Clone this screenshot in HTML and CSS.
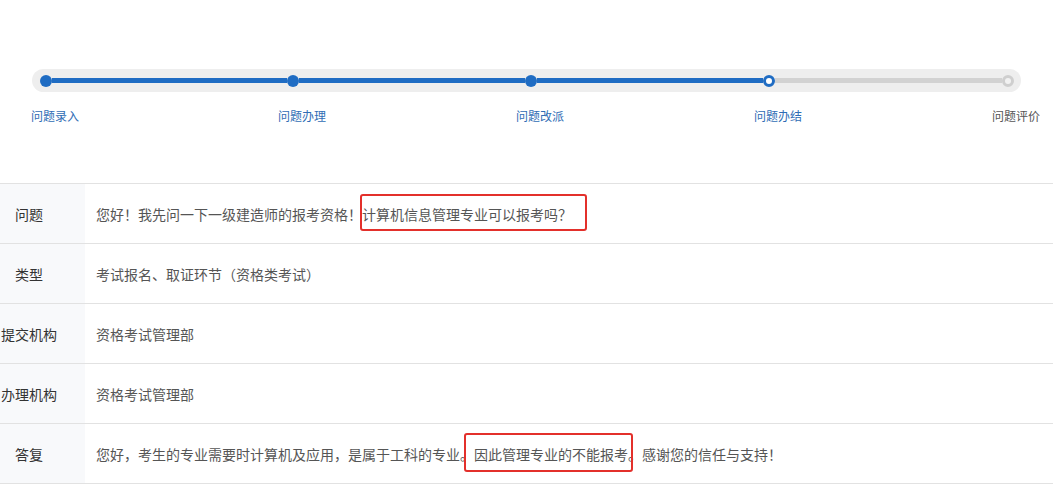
FILE: index.html
```html
<!DOCTYPE html>
<html lang="zh-CN">
<head>
    <meta charset="UTF-8">
    <meta name="viewport" content="width=device-width, initial-scale=1.0">
    <title>问题详情</title>
    <link rel="stylesheet" href="styles.css">
</head>
<body>
    <section class="progress">
        <div class="track">
            <span class="dot done"></span>
            <span class="seg seg-first done"></span>
            <span class="dot done"></span>
            <span class="seg done"></span>
            <span class="dot done"></span>
            <span class="seg done"></span>
            <span class="dot current"></span>
            <span class="seg seg-last"></span>
            <span class="dot todo"></span>
        </div>
        <div class="step-labels">
            <span class="step-label done">问题录入</span>
            <span class="step-label done">问题办理</span>
            <span class="step-label done">问题改派</span>
            <span class="step-label done">问题办结</span>
            <span class="step-label">问题评价</span>
        </div>
    </section>

    <table class="detail">
        <tr>
            <th>问题</th>
            <td>您好！我先问一下一级建造师的报考资格！<span class="mark mark-question">计算机信息管理专业可以报考吗？</span></td>
        </tr>
        <tr>
            <th>类型</th>
            <td>考试报名、取证环节（资格类考试）</td>
        </tr>
        <tr>
            <th>提交机构</th>
            <td>资格考试管理部</td>
        </tr>
        <tr>
            <th>办理机构</th>
            <td>资格考试管理部</td>
        </tr>
        <tr>
            <th>答复</th>
            <td>您好，考生的专业需要时计算机及应用，是属于工科的专业。<span class="mark mark-answer">因此管理专业的不能报考。</span>感谢您的信任与支持！</td>
        </tr>
    </table>
</body>
</html>
```

FILE: styles.css
```css
* {
    margin: 0;
    padding: 0;
    box-sizing: border-box;
    font-family: "Noto Sans CJK SC", "Noto Sans", sans-serif;
}

:root {
    --blue: #1f6cc3;
    --track: #eeeeee;
    --line-gray: #d2d2d2;
    --border: #e2e2e2;
}

body {
    background: #fff;
    color: #333;
    width: 1053px;
    height: 490px;
    overflow: hidden;
}

.progress {
    padding-top: 69px;
}

.track {
    margin-left: 32px;
    width: 989px;
    height: 23px;
    border-radius: 12px;
    background: var(--track);
    display: flex;
    align-items: center;
    padding: 0 7px 0 8px;
}

.dot {
    flex: none;
    width: 12px;
    height: 12px;
    border-radius: 50%;
    background: var(--blue);
}

.dot.current {
    background: #fff;
    border: 3px solid var(--blue);
}

.dot.todo {
    background: #f2f2f2;
    border: 3px solid #cfcfcf;
}

.seg {
    flex: none;
    width: 226px;
    height: 5px;
    background: var(--line-gray);
}

.seg.done {
    background: var(--blue);
}

.seg-first {
    width: 235px;
}

.seg-last {
    width: 227px;
}

.step-labels {
    display: grid;
    grid-template-columns: 247px 238px 238px 238px auto;
    margin: 16px 0 0 31px;
}

.step-label {
    font-size: 12px;
    line-height: 16px;
    color: #555;
}

.step-label.done {
    color: #2f6db5;
}

.detail {
    margin-top: 59px;
    width: 100%;
    border-collapse: collapse;
    font-size: 14px;
}

.detail tr {
    height: 60px;
    border-top: 1px solid var(--border);
    border-bottom: 1px solid var(--border);
}

.detail th {
    width: 85px;
    padding-right: 27px;
    background: #f8f9fb;
    font-weight: normal;
    text-align: center;
    color: #333;
    white-space: nowrap;
}

.detail td {
    padding-left: 11px;
    color: #555;
    white-space: nowrap;
}

.mark {
    position: relative;
    display: inline-block;
    line-height: 20px;
}

.mark::after {
    content: '';
    position: absolute;
    border: 2px solid #e3302b;
    border-radius: 3px;
}

.mark-question::after {
    top: -10px;
    bottom: -7px;
    left: -2px;
    right: -15px;
}

.mark-answer::after {
    top: -11px;
    bottom: -8px;
    left: -10px;
    right: 9px;
}
```
